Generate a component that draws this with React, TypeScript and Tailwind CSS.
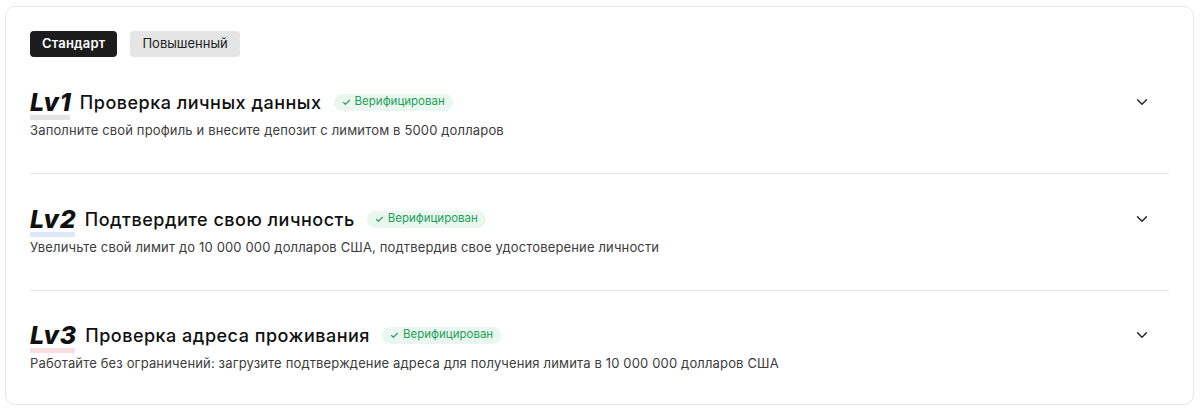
import React, { useState } from "react";
import { ChevronDown, Check } from "lucide-react";

const levels = [
  {
    lv: "Lv1",
    bar: "bg-[#e4e4e4]",
    title: "Проверка личных данных",
    desc: "Заполните свой профиль и внесите депозит с лимитом в 5000 долларов",
  },
  {
    lv: "Lv2",
    bar: "bg-[#dde8f7]",
    title: "Подтвердите свою личность",
    desc: "Увеличьте свой лимит до 10 000 000 долларов США, подтвердив свое удостоверение личности",
  },
  {
    lv: "Lv3",
    bar: "bg-[#f9dde0]",
    title: "Проверка адреса проживания",
    desc: "Работайте без ограничений: загрузите подтверждение адреса для получения лимита в 10 000 000 долларов США",
  },
];

export default function App() {
  const [tab, setTab] = useState("std");

  return (
    <div
      className="bg-white w-[1200px] h-[411px] pl-[5px] pt-[6px]"
      style={{ fontFamily: "Inter, 'Noto Sans', sans-serif" }}
    >
      <div className="w-[1189px] h-[399px] border border-[#e6e6e6] rounded-[10px] p-6">
        <div className="flex gap-[13px]">
          <button
            onClick={() => setTab("std")}
            className={
              tab === "std"
                ? "h-[26px] px-[12px] rounded-[4px] bg-[#1c1c1c] text-white text-[13px] font-semibold tracking-[0.2px]"
                : "h-[26px] px-[12px] rounded-[4px] bg-[#e5e5e5] text-[#222] text-[13px]"
            }
          >
            Стандарт
          </button>
          <button
            onClick={() => setTab("adv")}
            className={
              tab === "adv"
                ? "h-[26px] px-[12px] rounded-[4px] bg-[#1c1c1c] text-white text-[13px] font-semibold tracking-[0.2px]"
                : "h-[26px] px-[12px] rounded-[4px] bg-[#e5e5e5] text-[#222] text-[13px]"
            }
          >
            Повышенный
          </button>
        </div>

        {levels.map((l, i) => (
          <div
            key={l.lv}
            className={
              i < levels.length - 1
                ? "flex items-start justify-between pt-[31px] pb-[33px] border-b border-[#e6e6e6]"
                : "flex items-start justify-between pt-[30px]"
            }
          >
            <div className="flex flex-col">
              <div className="flex items-center h-[28px]">
                <span className="relative mr-[8px] inline-block">
                  <span
                    className={`absolute left-0 right-[2px] bottom-[-3px] h-[5px] ${l.bar}`}
                  />
                  <span className="relative text-[25px] leading-[28px] font-extrabold italic text-[#111] tracking-[1px]">
                    {l.lv}
                  </span>
                </span>
                <span className="text-[18px] font-medium text-[#111] tracking-[0.5px]">
                  {l.title}
                </span>
                <span className="ml-[12px] flex items-center gap-[4px] h-[17px] px-[8px] rounded-full bg-[#e9f7ef] text-[#1f9e58] text-[11.5px]">
                  <Check size={9} strokeWidth={3} />
                  Верифицирован
                </span>
              </div>
              <div className="mt-[4px] text-[13px] leading-[20px] text-[#3c3c3c] tracking-[0.15px]">
                {l.desc}
              </div>
            </div>
            <div className="h-[28px] flex items-center mr-[18px]">
              <ChevronDown size={18} strokeWidth={1.8} className="text-[#222]" />
            </div>
          </div>
        ))}
      </div>
    </div>
  );
}
